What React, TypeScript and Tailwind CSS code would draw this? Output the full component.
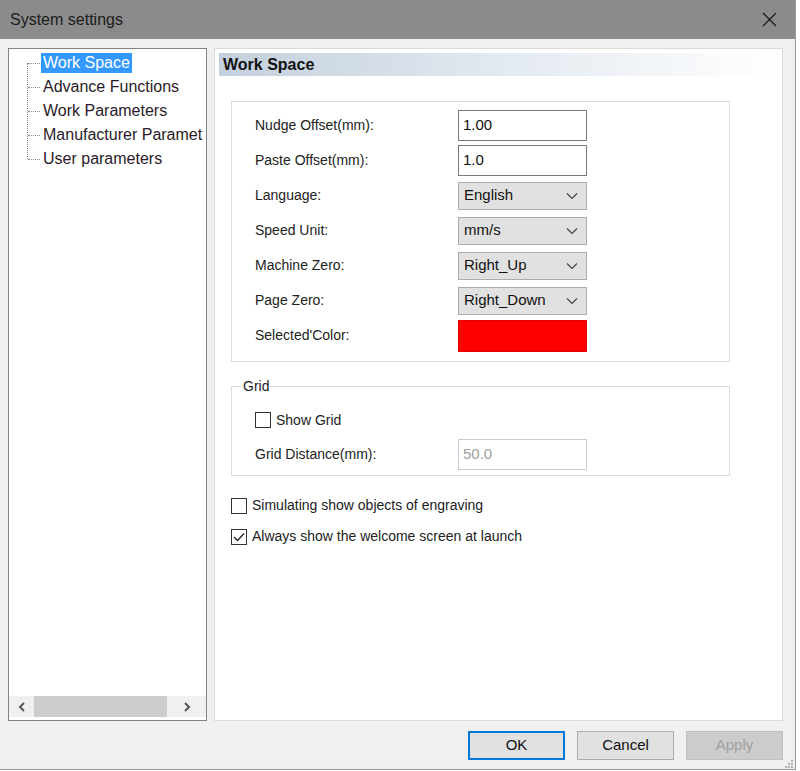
import React from 'react'

const font = { fontFamily: '"Liberation Sans", Arial, sans-serif' }

const treeItems = ['Work Space', 'Advance Functions', 'Work Parameters', 'Manufacturer Paramet', 'User parameters']

function Chevron() {
  return (
    <svg width="12" height="8" viewBox="0 0 12 8" fill="none">
      <polyline points="1,1.5 6,6.5 11,1.5" stroke="#444" strokeWidth="1.2" />
    </svg>
  )
}

function TextBox({ value }: { value: string }) {
  return (
    <div className="w-[129px] h-[31px] border border-[#7a7a7a] bg-white flex items-center px-[4px] text-[15px] text-[#111]">
      {value}
    </div>
  )
}

function Select({ value }: { value: string }) {
  return (
    <div className="w-[129px] h-[28px] border border-[#adadad] bg-[#e1e1e1] flex items-center justify-between pl-[5px] pr-[8px] text-[15px] text-[#111]">
      <span>{value}</span>
      <Chevron />
    </div>
  )
}

function Row({ label, children }: { label: string; children: React.ReactNode }) {
  return (
    <div className="flex items-center h-[35px]">
      <div className="w-[203px] text-[14px] text-[#222]">{label}</div>
      {children}
    </div>
  )
}

function CheckBox({ checked }: { checked?: boolean }) {
  return (
    <div className="w-[16px] h-[16px] border border-[#333] bg-white flex items-center justify-center">
      {checked && (
        <svg width="12" height="10" viewBox="0 0 12 10" fill="none">
          <polyline points="1,5 4.5,8.5 11,1.5" stroke="#222" strokeWidth="1.3" />
        </svg>
      )}
    </div>
  )
}

export default function App() {
  return (
    <div className="w-[800px] h-[771px] bg-white" style={font}>
      <div className="w-[796px] h-[770px] border-r border-b border-[#9a9a9a] flex flex-col">
        <div className="h-[39px] bg-[#8b8b8b] flex items-center justify-between pl-[10px] pr-[18px]">
          <span className="text-[16px] text-[#1b1b1b]">System settings</span>
          <svg width="15" height="15" viewBox="0 0 15 15">
            <path d="M1 1 L14 14 M14 1 L1 14" stroke="#1b1b1b" strokeWidth="1.3" />
          </svg>
        </div>

        <div className="flex-1 bg-[#f0f0f0] flex flex-col">
          <div className="flex gap-[7px] pl-[8px] pt-[9px]">
            {/* tree */}
            <div className="w-[199px] h-[673px] border border-[#828282] bg-white flex flex-col">
              <div className="flex-1 relative pt-[2px]">
                <div className="absolute left-[18px] top-[14px] h-[96px] border-l border-dotted border-[#888]" />
                {treeItems.map((item, i) => (
                  <div key={item} className="flex items-center h-[24px]">
                    <div className="w-[12px] ml-[19px] border-t border-dotted border-[#888]" />
                    <span
                      className={
                        'ml-[1px] px-[2px] text-[16px] leading-[20px] whitespace-nowrap ' +
                        (i === 0 ? 'bg-[#3399ff] text-white' : 'text-[#2a1a2a]')
                      }
                    >
                      {item}
                    </span>
                  </div>
                ))}
              </div>
              <div className="h-[21px] mb-[3px] bg-[#f0f0f0] flex items-center">
                <div className="w-[25px] flex justify-center">
                  <svg width="8" height="10" viewBox="0 0 8 10" fill="none">
                    <polyline points="6,1 2,5 6,9" stroke="#555" strokeWidth="2" />
                  </svg>
                </div>
                <div className="w-[133px] h-[21px] bg-[#cdcdcd]" />
                <div className="flex-1 flex justify-center">
                  <svg width="8" height="10" viewBox="0 0 8 10" fill="none">
                    <polyline points="2,1 6,5 2,9" stroke="#555" strokeWidth="2" />
                  </svg>
                </div>
              </div>
            </div>

            {/* page */}
            <div className="w-[569px] h-[673px] border border-[#dadada] bg-white p-[4px]">
              <div className="h-[23px] bg-gradient-to-r from-[#c3d0dd] via-[#e2e9f0] to-white flex items-center pl-[4px] text-[16px] font-bold text-[#111]">
                Work Space
              </div>

              <div className="ml-[12px] mt-[25px] w-[499px] border border-[#dcdcdc] pl-[23px] pt-[6px] pb-[8px]">
                <Row label="Nudge Offset(mm):">
                  <TextBox value="1.00" />
                </Row>
                <Row label="Paste Offset(mm):">
                  <TextBox value="1.0" />
                </Row>
                <Row label="Language:">
                  <Select value="English" />
                </Row>
                <Row label="Speed Unit:">
                  <Select value="mm/s" />
                </Row>
                <Row label="Machine Zero:">
                  <Select value="Right_Up" />
                </Row>
                <Row label="Page Zero:">
                  <Select value="Right_Down" />
                </Row>
                <Row label="Selected'Color:">
                  <div className="w-[129px] h-[32px] bg-[#ff0000] border border-[#e00000]" />
                </Row>
              </div>

              <fieldset className="ml-[12px] mt-[14px] w-[499px] h-[100px] border border-[#dcdcdc] pl-[23px] pt-[6px]">
                <legend className="ml-[-13px] px-[1px] text-[14px] text-[#222]">Grid</legend>
                <div className="flex items-center gap-[5px] h-[34px]">
                  <CheckBox />
                  <span className="text-[14px] text-[#222]">Show Grid</span>
                </div>
                <Row label="Grid Distance(mm):">
                  <div className="w-[129px] h-[31px] border border-[#cccccc] bg-white flex items-center px-[4px] text-[15px] text-[#a0a0a0]">
                    50.0
                  </div>
                </Row>
              </fieldset>

              <div className="ml-[12px] mt-[14px] flex flex-col">
                <div className="flex items-center gap-[5px] h-[31px]">
                  <CheckBox />
                  <span className="text-[14px] text-[#222]">Simulating show objects of engraving</span>
                </div>
                <div className="flex items-center gap-[5px] h-[31px]">
                  <CheckBox checked />
                  <span className="text-[14px] text-[#222]">Always show the welcome screen at launch</span>
                </div>
              </div>
            </div>
          </div>

          <div className="flex justify-end gap-[12px] pr-[12px] mt-[10px] relative">
            <div className="w-[97px] h-[29px] border-2 border-[#0078d7] bg-[#e1e1e1] flex items-center justify-center text-[15px] text-[#111]">
              OK
            </div>
            <div className="w-[97px] h-[29px] border border-[#adadad] bg-[#e1e1e1] flex items-center justify-center text-[15px] text-[#111]">
              Cancel
            </div>
            <div className="w-[97px] h-[29px] border border-[#bfbfbf] bg-[#cccccc] flex items-center justify-center text-[15px] text-[#a0a0a0]">
              Apply
            </div>
            <div className="absolute right-[2px] bottom-[-8px] grid grid-cols-3 gap-[1px]">
              {[0, 0, 1, 0, 1, 1, 1, 1, 1].map((v, i) => (
                <div key={i} className={'w-[2px] h-[2px] ' + (v ? 'bg-[#b0b0b0]' : '')} />
              ))}
            </div>
          </div>
        </div>
      </div>
    </div>
  )
}
